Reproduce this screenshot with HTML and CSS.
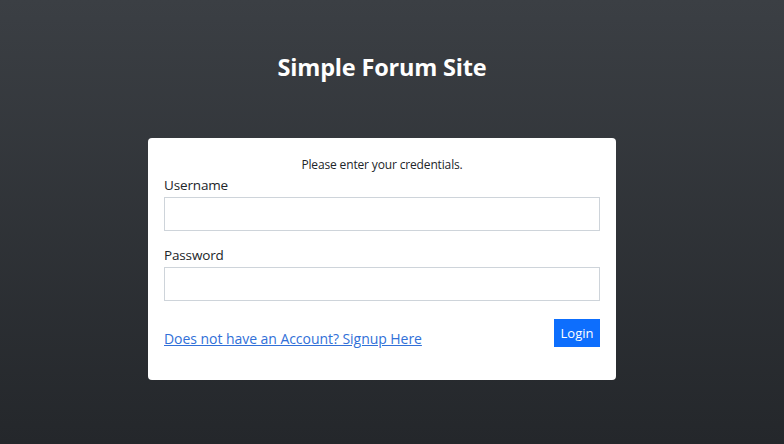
FILE: index.html
```html
<!DOCTYPE html>
<html lang="en">
<head>
<meta charset="utf-8">
<title>Simple Forum Site</title>
<link rel="stylesheet" href="styles.css">
</head>
<body>
<main class="page">
  <h1 class="title">Simple Forum Site</h1>
  <form class="card">
    <p class="intro">Please enter your credentials.</p>
    <label class="label" for="username">Username</label>
    <input class="field" id="username" type="text">
    <label class="label label-gap" for="password">Password</label>
    <input class="field" id="password" type="password">
    <div class="actions">
      <a class="signup" href="#">Does not have an Account? Signup Here</a>
      <button class="btn" type="button">Login</button>
    </div>
  </form>
</main>
</body>
</html>
```
FILE: styles.css
```css
html, body {
  margin: 0;
  padding: 0;
}
body {
  min-height: 444px;
  background: linear-gradient(180deg, #3b3f44 0%, #24272b 100%);
  font-family: "Open Sans", "Noto Sans", sans-serif;
  color: #212529;
}
.page {
  display: flex;
  flex-direction: column;
  align-items: center;
  padding-top: 50px;
  padding-right: 20px;
}
.title {
  margin: 0;
  color: #ffffff;
  font-size: 23.5px;
  font-weight: 700;
  line-height: 34px;
  letter-spacing: -0.2px;
}
.card {
  margin-top: 54px;
  width: 468px;
  box-sizing: border-box;
  background: #ffffff;
  border-radius: 4px;
  padding: 18px 16px 33px;
  display: flex;
  flex-direction: column;
}
.intro {
  margin: 0;
  text-align: center;
  font-size: 12px;
  line-height: 18px;
  letter-spacing: -0.15px;
}
.label {
  margin-top: 1px;
  margin-bottom: 2px;
  font-size: 13.5px;
  line-height: 20px;
  letter-spacing: -0.15px;
}
.label-gap {
  margin-top: 14px;
}
.field {
  height: 34px;
  box-sizing: border-box;
  border: 1px solid #ced4da;
  border-radius: 0;
  padding: 4px 8px;
  font-family: inherit;
  font-size: 14px;
  background: #ffffff;
}
.actions {
  margin-top: 18px;
  display: flex;
  justify-content: space-between;
  align-items: flex-end;
}
.signup {
  color: #3170d8;
  font-size: 14px;
  line-height: 16px;
  letter-spacing: -0.05px;
  text-decoration: underline;
}
.btn {
  height: 28px;
  width: 46px;
  border: none;
  border-radius: 0;
  background: #0d6efd;
  color: #ffffff;
  font-family: inherit;
  font-size: 13px;
  padding: 0;
}
```
